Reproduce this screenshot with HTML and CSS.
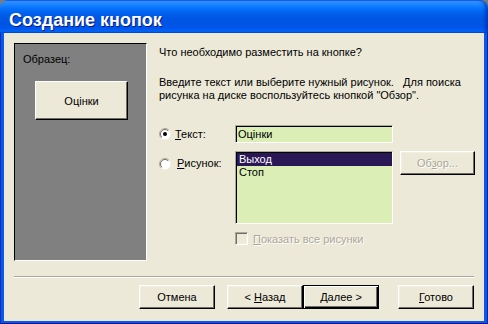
FILE: index.html
```html
<!DOCTYPE html>
<html>
<head>
    <title>Создание кнопок</title>
    <link rel="stylesheet" href="styles.css">
</head>
<body>
    <div class="window">
        <div class="titlebar">
            <span class="title">Создание кнопок</span>
        </div>
        <div class="client">
            <div class="main">
                <div class="preview">
                    <div class="preview-label">Образец:</div>
                    <div class="sample-btn">Оцінки</div>
                </div>
                <div class="content">
                    <p class="question">Что необходимо разместить на кнопке?</p>
                    <p class="hint">Введите текст или выберите нужный рисунок.&nbsp;&nbsp; Для поиска<br>рисунка на диске воспользуйтесь кнопкой "Обзор".</p>
                    <div class="options">
                        <label class="option row-text">
                            <svg class="radio" width="12" height="12" viewBox="0 0 12 12">
                                <circle cx="6" cy="6" r="5.5" fill="#fff"/>
                                <path d="M9.9 2.1 A5.5 5.5 0 0 0 2.1 9.9" stroke="#aca899" fill="none"/>
                                <path d="M9.2 2.8 A4.5 4.5 0 0 0 2.8 9.2" stroke="#716f64" fill="none"/>
                                <circle cx="6" cy="6" r="2" fill="#000"/>
                            </svg>
                            <span><u>Т</u>екст:</span>
                        </label>
                        <div class="field row-text">Оцінки</div>

                        <label class="option option-top row-pic">
                            <svg class="radio" width="12" height="12" viewBox="0 0 12 12">
                                <circle cx="6" cy="6" r="5.5" fill="#fff"/>
                                <path d="M9.9 2.1 A5.5 5.5 0 0 0 2.1 9.9" stroke="#aca899" fill="none"/>
                                <path d="M9.2 2.8 A4.5 4.5 0 0 0 2.8 9.2" stroke="#716f64" fill="none"/>
                            </svg>
                            <span><u>Р</u>исунок:</span>
                        </label>
                        <div class="listbox row-pic">
                            <div class="list-item selected">Выход</div>
                            <div class="list-item">Стоп</div>
                        </div>
                        <div class="btn disabled browse row-pic"><span>Об<u>з</u>ор...</span></div>

                        <label class="check-row">
                            <span class="checkbox"></span>
                            <span><u>П</u>оказать все рисунки</span>
                        </label>
                    </div>
                </div>
            </div>
            <div class="separator"></div>
            <div class="buttons">
                <div class="btn cancel"><span>Отмена</span></div>
                <div class="btn"><span>&lt; <u>Н</u>азад</span></div>
                <div class="btn default"><span><u>Д</u>алее &gt;</span></div>
                <div class="btn finish"><span><u>Г</u>отово</span></div>
            </div>
        </div>
    </div>
</body>
</html>
```

FILE: styles.css
```css
:root {
    --face: #ece9d8;
    --light: #f1efe2;
    --shadow: #aca899;
    --dark: #716f64;
    --field: #dbeeb5;
    --select: #2a1856;
}

body {
    margin: 0;
    background: #7b7b7b;
    font-family: 'Liberation Sans', Arial, sans-serif;
    font-size: 11px;
    color: #000;
}

u {
    text-decoration: underline;
    text-underline-offset: 1px;
}

.window {
    width: 488px;
    height: 324px;
    display: flex;
    flex-direction: column;
}

.titlebar {
    height: 33px;
    box-sizing: border-box;
    padding: 11px 0 0 9px;
    border-radius: 8px 8px 0 0;
    background: linear-gradient(to bottom,
        #0058ee 0%, #3a93ff 4%, #288eff 8%, #127dff 18%, #036ffc 28%,
        #0262ee 38%, #0057e5 55%, #0054e3 70%, #0055eb 85%, #005bf5 90%,
        #026afe 94%, #0062ef 97%, #0043cf 100%);
    box-shadow: inset -3px 0 3px rgba(0, 30, 150, 0.5);
}

.title {
    font-weight: bold;
    font-size: 18px;
    line-height: 18px;
    color: #fff;
    text-shadow: 1px 1px 0 #0a1883;
}

.client {
    flex: 1;
    background: var(--face);
    border: 4px solid #0b57ea;
    border-top: none;
    border-bottom-width: 3px;
    padding: 10px 10px 0 10px;
    display: flex;
    flex-direction: column;
    position: relative;
}

.client::before {
    content: '';
    position: absolute;
    left: -4px;
    right: -4px;
    bottom: -3px;
    top: 0;
    border-left: 1px solid #0831b8;
    border-right: 1px solid #0026a8;
    border-bottom: 1px solid #00138c;
    pointer-events: none;
}

.main {
    display: flex;
    height: 218px;
}

.preview {
    flex-shrink: 0;
    width: 133px;
    box-sizing: border-box;
    background: #808080;
    border: 1px solid;
    border-color: #000 #fff #fff #000;
    padding: 9px 0 0 8px;
}

.preview-label {
    line-height: 13px;
}

.sample-btn {
    width: 93px;
    height: 39px;
    box-sizing: border-box;
    margin: 15px 0 0 12px;
    background: var(--face);
    border: 1px solid;
    border-color: #fff #000 #000 #fff;
    box-shadow: inset -1px -1px 0 #716f64;
    display: flex;
    align-items: center;
    justify-content: center;
}

.content {
    margin-left: 12px;
    flex: 1;
    min-width: 0;
}

.question {
    margin: 3px 0 0 0;
    line-height: 13px;
}

.hint {
    margin: 17px 0 0 0;
    line-height: 13px;
}

.options {
    display: grid;
    grid-template-columns: 69px 158px 75px;
    column-gap: 7px;
    row-gap: 8px;
    margin-top: 23px;
}

.row-text {
    grid-row: 1;
}

.row-pic {
    grid-row: 2;
}

.option {
    grid-column: 1;
    display: flex;
    align-items: center;
    gap: 4px;
}

.option-top {
    align-items: flex-start;
    padding-top: 7px;
}

.option-top span {
    margin-top: -1px;
    margin-left: 2px;
}

.field {
    grid-column: 2;
    height: 18px;
    box-sizing: border-box;
    background: var(--field);
    border: 1px solid;
    border-color: var(--shadow) #fff #fff var(--shadow);
    box-shadow: inset 1px 1px 0 #000;
    padding: 2px 0 0 2px;
    line-height: 13px;
}

.listbox {
    grid-column: 2;
    height: 73px;
    box-sizing: border-box;
    background: var(--field);
    border: 1px solid;
    border-color: var(--shadow) #fff #fff var(--shadow);
    box-shadow: inset 1px 1px 0 #000;
    padding: 1px 0 0 1px;
}

.list-item {
    height: 13px;
    line-height: 13px;
    padding-left: 2px;
}

.list-item.selected {
    background: var(--select);
    color: #fff;
}

.btn {
    width: 76px;
    height: 24px;
    box-sizing: border-box;
    background: var(--face);
    border: 1px solid;
    border-color: #fff #000 #000 #fff;
    box-shadow: inset -1px -1px 0 var(--dark), inset 1px 1px 0 var(--light);
    display: flex;
    align-items: center;
    justify-content: center;
    white-space: pre;
}

.btn.disabled {
    color: var(--shadow);
    text-shadow: 1px 1px 0 #fff;
}

.browse {
    grid-column: 3;
    align-self: start;
    width: 75px;
}

.check-row {
    grid-row: 3;
    grid-column: 2 / 4;
    display: flex;
    align-items: center;
    gap: 5px;
    color: var(--shadow);
    text-shadow: 1px 1px 0 #fff;
}

.checkbox {
    width: 13px;
    height: 13px;
    box-sizing: border-box;
    border: 1px solid;
    border-color: var(--shadow) #fff #fff var(--shadow);
    box-shadow: inset 1px 1px 0 var(--dark), inset -1px -1px 0 var(--light);
}

.separator {
    margin-top: 15px;
    height: 1px;
    background: var(--shadow);
    border-bottom: 1px solid #fff;
}

.buttons {
    display: flex;
    justify-content: flex-end;
    margin-top: 7px;
}

.cancel {
    margin-right: 12px;
}

.btn.default {
    border-color: #000;
    box-shadow: inset 1px 1px 0 #fff, inset -1px -1px 0 #000, inset -2px -2px 0 var(--dark);
    margin-right: 19px;
}
```
